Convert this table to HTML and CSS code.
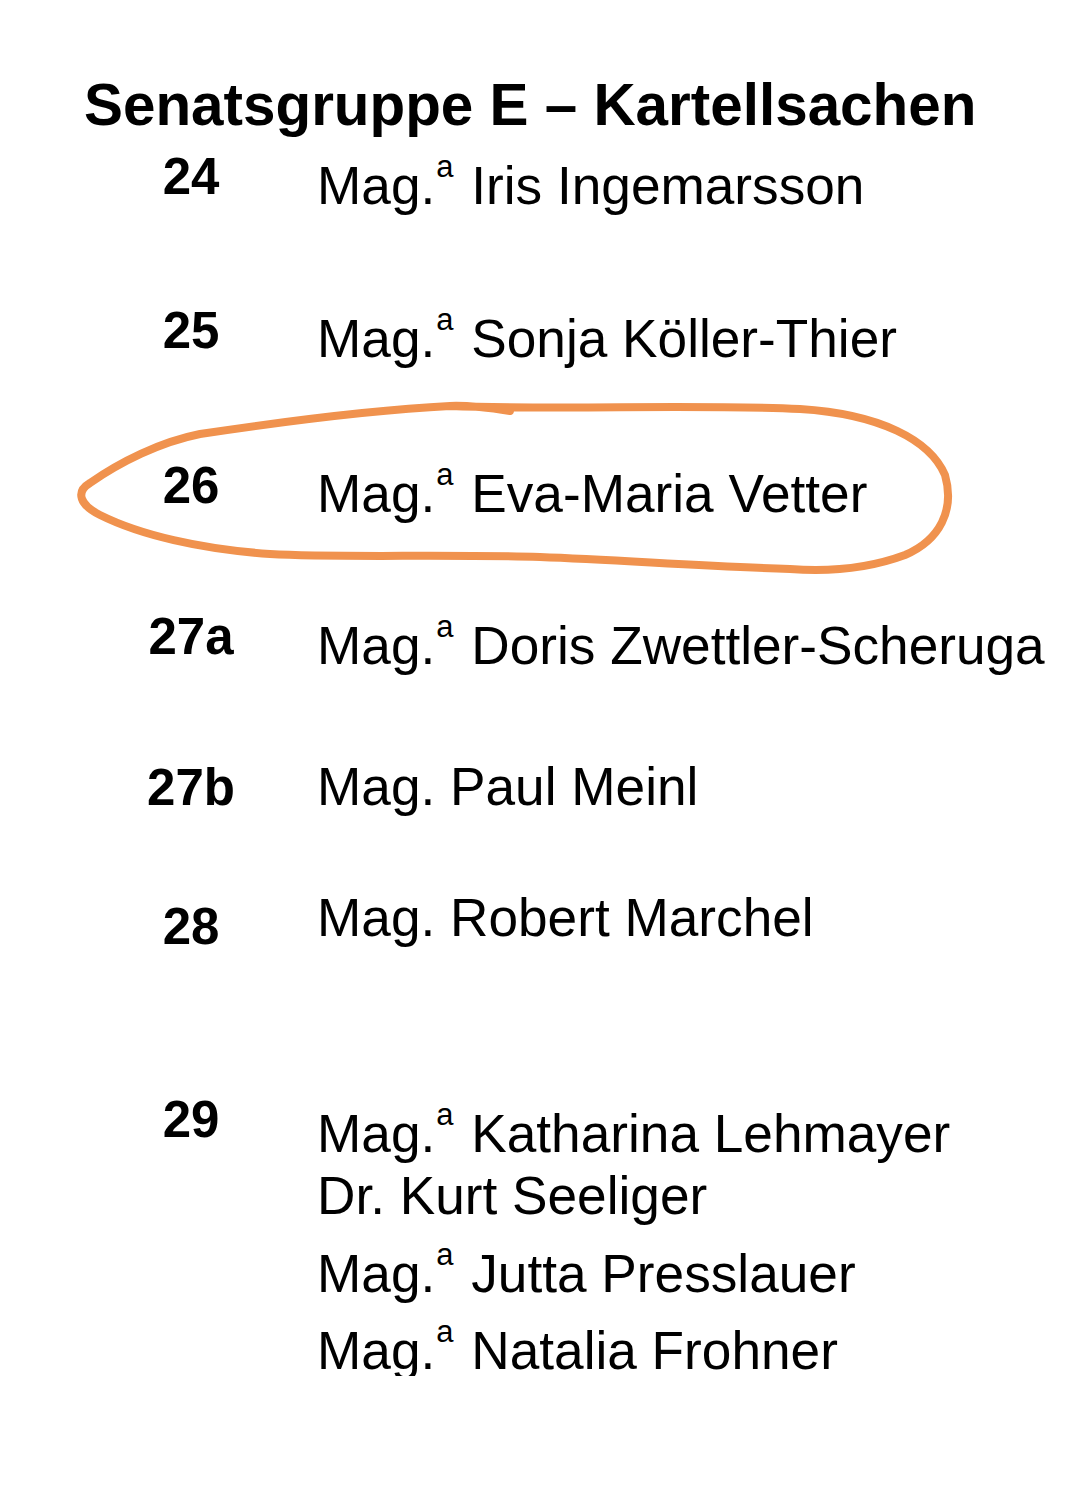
FILE: index.html
```html
<!DOCTYPE html>
<html lang="de">
<head>
<meta charset="utf-8">
<title>Senatsgruppe E – Kartellsachen</title>
<link rel="stylesheet" href="styles.css">
</head>
<body>
<main class="page">
  <h1 class="title">Senatsgruppe E – Kartellsachen</h1>
  <div class="roster">
    <div class="num">24</div>
    <div class="name pad9">Mag.<span class="sup">a</span> Iris Ingemarsson</div>

    <div class="num">25</div>
    <div class="name pad8">Mag.<span class="sup">a</span> Sonja Köller-Thier</div>

    <div class="num">26</div>
    <div class="name pad8">Mag.<span class="sup">a</span> Eva-Maria Vetter</div>

    <div class="num">27a</div>
    <div class="name pad9">Mag.<span class="sup">a</span> Doris Zwettler-Scheruga</div>

    <div class="num pad1">27b</div>
    <div class="name">Mag. Paul Meinl</div>

    <div class="num pad9">28</div>
    <div class="name">Mag. Robert Marchel</div>

    <div class="num">29</div>
    <div class="name pad14">
      <div class="line">Mag.<span class="sup">a</span> Katharina Lehmayer</div>
      <div class="line line-plain">Dr. Kurt Seeliger</div>
      <div class="line line-sup">Mag.<span class="sup">a</span> Jutta Presslauer</div>
      <div class="line line-sup line-cut">Mag.<span class="sup">a</span> Natalia Frohner</div>
    </div>
  </div>

  <svg class="circle" width="1080" height="1491" viewBox="0 0 1080 1491" aria-hidden="true">
    <path d="M 450 406 C 560 410, 700 404, 800 409 C 880 414, 930 440, 945 475 C 955 510, 940 540, 905 555 C 870 568, 830 572, 790 569 C 700 566, 620 560, 540 557 C 440 554, 340 558, 270 554 C 200 549, 140 535, 100 515 C 80 505, 75 492, 90 483 C 120 462, 160 442, 200 434 C 280 422, 370 410, 450 406 C 470 405, 490 408, 510 411"
      fill="none" stroke="#f0924e" stroke-width="8" stroke-linecap="round" stroke-linejoin="round"/>
  </svg>
</main>
</body>
</html>
```

FILE: styles.css
```css
html, body {
  margin: 0;
  padding: 0;
  background: #ffffff;
}

body {
  font-family: "Liberation Sans", Arial, sans-serif;
  color: #000000;
}

.page {
  position: relative;
  width: 1080px;
  height: 1491px;
  padding-top: 72px;
  box-sizing: border-box;
  overflow: hidden;
}

.title {
  margin: 0;
  padding-left: 84px;
  font-size: 58.4px;
  line-height: 66px;
  font-weight: 700;
  white-space: nowrap;
}

.roster {
  display: grid;
  grid-template-columns: 122px 1fr;
  grid-template-rows: 154px 155px 151px 150px 131px 202px auto;
  column-gap: 65px;
  margin-top: 9px;
  margin-left: 130px;
}

.num {
  font-size: 51px;
  line-height: 60px;
  font-weight: 700;
  text-align: center;
  white-space: nowrap;
}

.name {
  font-size: 53.2px;
  line-height: 60px;
  white-space: nowrap;
}

.sup {
  font-size: 31px;
  line-height: 0;
  vertical-align: 27px;
  margin-left: 1px;
  margin-right: 3px;
}

.pad1 { padding-top: 1px; }
.pad8 { padding-top: 8px; }
.pad9 { padding-top: 9px; }
.pad14 { padding-top: 14px; }

.line {
  height: 60px;
}

.line-plain { margin-top: 2px; }
.line-sup { margin-top: 18px; }
.line-sup + .line-sup { margin-top: 17px; }

.line-cut {
  height: 55px;
  overflow: hidden;
}

.circle {
  position: absolute;
  top: 0;
  left: 0;
  pointer-events: none;
}
```
